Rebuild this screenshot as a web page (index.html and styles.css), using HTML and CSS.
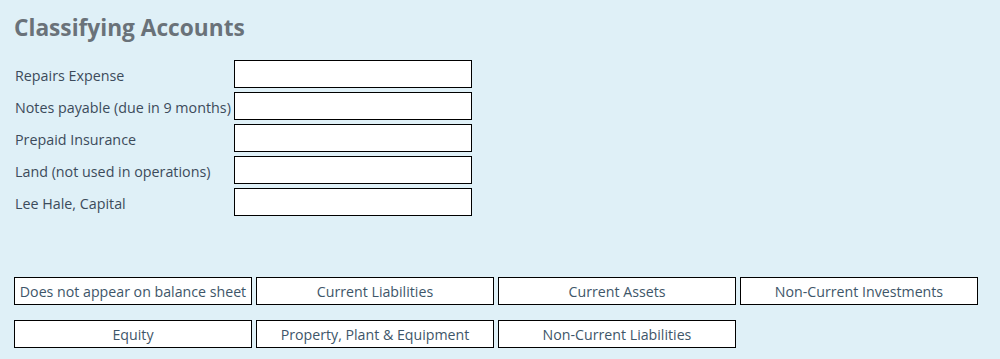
FILE: index.html
```html
<!DOCTYPE html>
<html>
<head>
<meta charset="utf-8">
<link rel="stylesheet" href="styles.css">
</head>
<body>
<div class="page">
  <h1 class="title">Classifying Accounts</h1>
  <div class="rows">
    <div class="row"><span class="label">Repairs Expense</span><div class="slot"></div></div>
    <div class="row"><span class="label">Notes payable (due in 9 months)</span><div class="slot"></div></div>
    <div class="row"><span class="label">Prepaid Insurance</span><div class="slot"></div></div>
    <div class="row"><span class="label">Land (not used in operations)</span><div class="slot"></div></div>
    <div class="row"><span class="label">Lee Hale, Capital</span><div class="slot"></div></div>
  </div>
  <div class="options">
    <div class="opt">Does not appear on balance sheet</div>
    <div class="opt">Current Liabilities</div>
    <div class="opt">Current Assets</div>
    <div class="opt">Non-Current Investments</div>
    <div class="opt">Equity</div>
    <div class="opt">Property, Plant &amp; Equipment</div>
    <div class="opt">Non-Current Liabilities</div>
  </div>
</div>
</body>
</html>
```

FILE: styles.css
```css
html, body {
  margin: 0;
  padding: 0;
  background: #dff0f7;
}
.page {
  padding: 13px 14px 0 14px;
  font-family: "Open Sans", "Noto Sans", sans-serif;
}
.title {
  margin: 0;
  font-size: 22.7px;
  line-height: 30px;
  font-weight: 700;
  color: #6a7279;
}
.rows {
  margin-top: 17px;
  display: flex;
  flex-direction: column;
  gap: 4px;
}
.row {
  display: flex;
  align-items: center;
  height: 28px;
}
.label {
  box-sizing: border-box;
  width: 220px;
  padding-left: 1px;
  padding-top: 2px;
  font-size: 14.3px;
  color: #3c4b5b;
  white-space: nowrap;
}
.slot {
  width: 236px;
  height: 26px;
  background: #fff;
  border: 1px solid #000;
}
.options {
  margin-top: 61px;
  display: grid;
  grid-template-columns: repeat(4, 238px);
  column-gap: 4px;
  row-gap: 15px;
}
.opt {
  box-sizing: border-box;
  height: 28px;
  background: #fff;
  border: 1px solid #000;
  display: flex;
  align-items: center;
  justify-content: center;
  font-size: 14.2px;
  color: #3e5669;
  white-space: nowrap;
}
```
